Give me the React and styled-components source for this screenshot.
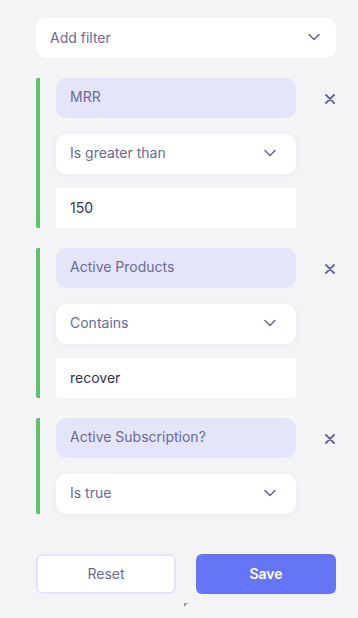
import React from 'react';
import styled, { createGlobalStyle } from 'styled-components';

const GlobalStyle = createGlobalStyle`
  html, body {
    margin: 0;
    padding: 0;
    background: #f4f4f7;
    font-family: Inter, "Noto Sans", sans-serif;
  }
`;

const Panel = styled.div`
  display: flex;
  flex-direction: column;
  width: 358px;
  min-height: 618px;
  padding: 18px 0 0 36px;
  box-sizing: border-box;
`;

const AddFilter = styled.div`
  display: flex;
  align-items: center;
  justify-content: space-between;
  height: 40px;
  width: 300px;
  padding: 0 16px 2px 14px;
  box-sizing: border-box;
  background: #ffffff;
  border-radius: 10px;
  color: #6a6a98;
  font-size: 14px;
`;

const Groups = styled.div`
  display: flex;
  flex-direction: column;
  gap: 20px;
  margin-top: 20px;
`;

const Group = styled.div`
  display: flex;
  align-items: flex-start;
  border-left: 4px solid #5bc466;
  border-radius: 2px;
  padding-left: 16px;
`;

const Fields = styled.div`
  display: flex;
  flex-direction: column;
  flex: 0 0 240px;
`;

const Field = styled.div`
  display: flex;
  align-items: center;
  height: 40px;
  padding: 0 14px 3px;
  box-sizing: border-box;
  background: #e5e5fa;
  border-radius: 10px;
  color: #6a6a98;
  font-size: 14px;
`;

const Select = styled.div`
  display: flex;
  align-items: center;
  justify-content: space-between;
  height: 40px;
  margin-top: 16px;
  padding: 0 20px 3px 14px;
  box-sizing: border-box;
  background: #ffffff;
  border-radius: 10px;
  box-shadow: 0 1px 6px rgba(60, 60, 120, 0.04);
  color: #6a6a98;
  font-size: 14px;
`;

const Input = styled.div`
  display: flex;
  align-items: center;
  height: 40px;
  margin-top: 14px;
  padding: 0 14px 2px;
  box-sizing: border-box;
  background: #ffffff;
  border-radius: 3px;
  color: #33334a;
  font-size: 14px;
`;

const Remove = styled.button`
  display: flex;
  align-items: center;
  justify-content: center;
  flex: 0 0 20px;
  height: 20px;
  margin: 11px 0 0 24px;
  padding: 0;
  border: none;
  background: none;
  color: #6a6a98;
`;

const Actions = styled.div`
  display: flex;
  gap: 20px;
  margin-top: 40px;
  width: 300px;
`;

const Button = styled.button`
  flex: 0 0 140px;
  height: 40px;
  padding-bottom: 2px;
  border-radius: 6px;
  font-family: inherit;
  font-size: 14px;
  box-sizing: border-box;
  border: ${(p) => (p.$primary ? 'none' : '2px solid #e5e5fa')};
  background: ${(p) => (p.$primary ? '#6675f5' : '#ffffff')};
  color: ${(p) => (p.$primary ? '#ffffff' : '#6a6a98')};
  font-weight: ${(p) => (p.$primary ? 600 : 400)};
`;

const Handle = styled.div`
  width: 0;
  height: 0;
  margin: 9px 0 0 148px;
  border-top: 4px solid #9a9aa6;
  border-right: 4px solid transparent;
`;

const Chevron = () => (
  <svg width="12" height="8" viewBox="0 0 12 8" fill="none">
    <path d="M1 1.5l5 5 5-5" stroke="#6a6a98" strokeWidth="1.6" strokeLinecap="round" strokeLinejoin="round" />
  </svg>
);

const Cross = () => (
  <svg width="10" height="10" viewBox="0 0 10 10" fill="none">
    <path d="M1 1l8 8M9 1l-8 8" stroke="#6a6a98" strokeWidth="2" strokeLinecap="round" />
  </svg>
);

const filters = [
  { field: 'MRR', op: 'Is greater than', value: '150' },
  { field: 'Active Products', op: 'Contains', value: 'recover' },
  { field: 'Active Subscription?', op: 'Is true' },
];

export default function App() {
  return (
    <>
      <GlobalStyle />
      <Panel>
        <AddFilter>
          Add filter
          <Chevron />
        </AddFilter>
        <Groups>
          {filters.map((f) => (
            <Group key={f.field}>
              <Fields>
                <Field>{f.field}</Field>
                <Select>
                  {f.op}
                  <Chevron />
                </Select>
                {f.value && <Input>{f.value}</Input>}
              </Fields>
              <Remove>
                <Cross />
              </Remove>
            </Group>
          ))}
        </Groups>
        <Actions>
          <Button>Reset</Button>
          <Button $primary>Save</Button>
        </Actions>
        <Handle />
      </Panel>
    </>
  );
}
